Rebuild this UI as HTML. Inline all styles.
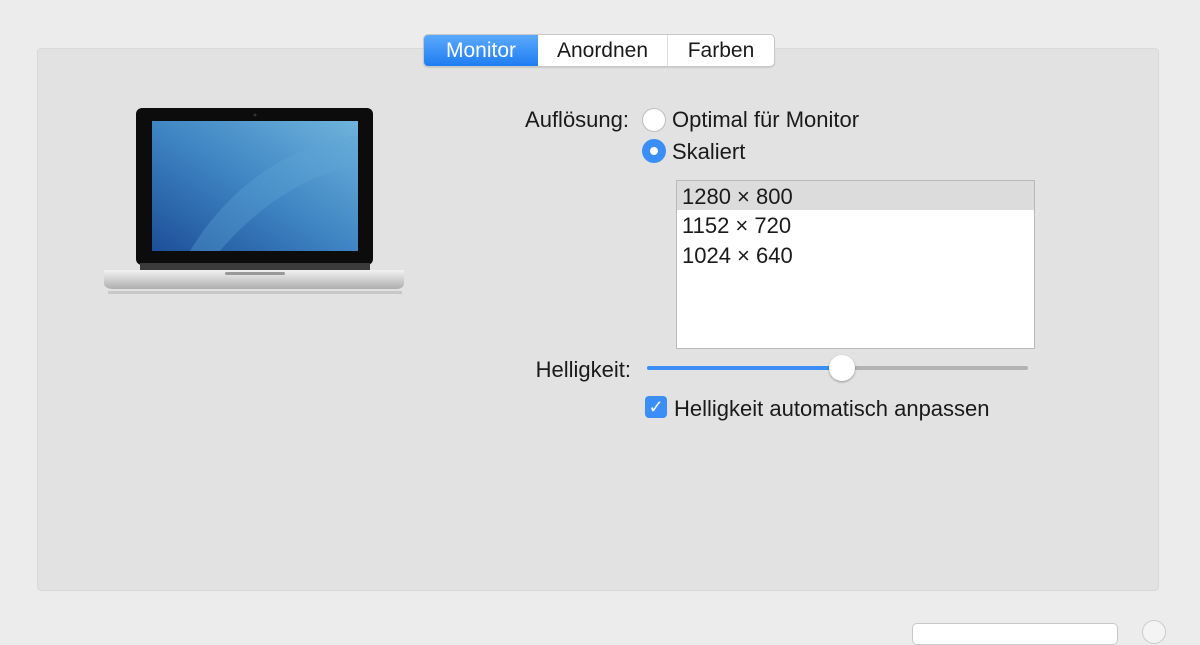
<!DOCTYPE html>
<html><head><meta charset="utf-8"><style>
body{margin:0;width:1200px;height:628px;background:#ececec;position:relative;overflow:hidden;font-family:"Liberation Sans",sans-serif;color:#1a1a1a;font-size:22px}
.a{position:absolute}
.panel{left:37px;top:48px;width:1120px;height:541px;background:#e2e2e2;border:1px solid #d8d8d8;border-radius:4px}
.tabs{left:423px;top:34px;height:31px;width:350px;background:#fff;border:1px solid #c8c8c8;border-radius:5px;display:flex;overflow:hidden;box-shadow:0 1px 1px rgba(0,0,0,.1);font-size:21px}
.tabs div{height:31px;line-height:31px;text-align:center}
.list{left:676px;top:180px;width:357px;height:167px;background:#fff;border:1px solid #b9b9b9}
.row{height:30px;line-height:32px;padding-left:5px}
</style></head><body>
<div class="a panel"></div>
<div class="a tabs">
<div style="width:114px;background:linear-gradient(#5aa9fb,#1f7df2);color:#fff">Monitor</div>
<div style="width:129px;border-right:1px solid #ddd">Anordnen</div>
<div style="width:106px">Farben</div>
</div>
<svg class="a" style="left:100px;top:105px" width="310" height="195" viewBox="0 0 310 195">
<defs><linearGradient id="s" x1="0" y1="1" x2="1" y2="0"><stop offset="0" stop-color="#1d4f98"/><stop offset=".5" stop-color="#3f86c4"/><stop offset="1" stop-color="#6fb4dc"/></linearGradient>
<linearGradient id="b" x1="0" y1="0" x2="0" y2="1"><stop offset="0" stop-color="#f2f2f2"/><stop offset="1" stop-color="#aeaeae"/></linearGradient></defs>
<rect x="36" y="3" width="237" height="157" rx="6" fill="#0c0c0c"/>
<rect x="52" y="16" width="206" height="130" fill="url(#s)"/>
<path d="M90 146 C130 80 190 40 258 30 L258 60 C200 70 150 110 120 146Z" fill="#5fa6d6" opacity=".35"/>
<circle cx="155" cy="10" r="1.5" fill="#333"/>
<rect x="40" y="158" width="230" height="8" fill="#3a3a3a"/>
<path d="M4 165 H304 V178 Q304 184 296 184 H14 Q4 184 4 178Z" fill="url(#b)"/>
<rect x="125" y="167" width="60" height="3" rx="1.5" fill="#999"/>
<rect x="8" y="186" width="294" height="3" fill="#c8c8c8"/>
</svg>
<div class="a" style="right:571px;top:107px">Auflösung:</div>
<div class="a" style="left:642px;top:108px;width:24px;height:24px;border-radius:50%;background:#fff;border:1px solid #bdbdbd;box-sizing:border-box"></div>
<div class="a" style="left:672px;top:107px">Optimal für Monitor</div>
<div class="a" style="left:642px;top:139px;width:24px;height:24px;border-radius:50%;background:#3a8ef5"><div style="margin:8px;width:8px;height:8px;border-radius:50%;background:#fff"></div></div>
<div class="a" style="left:672px;top:139px">Skaliert</div>
<div class="a list">
<div class="row" style="background:#dcdcdc;height:29px">1280 × 800</div>
<div class="row">1152 × 720</div>
<div class="row">1024 × 640</div>
</div>
<div class="a" style="right:569px;top:357px">Helligkeit:</div>
<div class="a" style="left:647px;top:366px;width:381px;height:4px;border-radius:2px;background:#b3b3b3"></div>
<div class="a" style="left:647px;top:366px;width:196px;height:4px;border-radius:2px;background:#3a8ef5"></div>
<div class="a" style="left:829px;top:355px;width:26px;height:26px;border-radius:50%;background:#fff;box-shadow:0 1px 2px rgba(0,0,0,.35)"></div>
<div class="a" style="left:645px;top:396px;width:22px;height:22px;border-radius:4px;background:#3a8ef5;color:#fff;font-size:18px;line-height:22px;text-align:center">✓</div>
<div class="a" style="left:674px;top:396px">Helligkeit automatisch anpassen</div>
<div class="a" style="left:912px;top:623px;width:204px;height:20px;background:#fff;border:1px solid #c8c8c8;border-radius:5px"></div>
<div class="a" style="left:1142px;top:620px;width:22px;height:22px;border-radius:50%;background:#f4f4f4;border:1px solid #ccc"></div>
</body></html>
